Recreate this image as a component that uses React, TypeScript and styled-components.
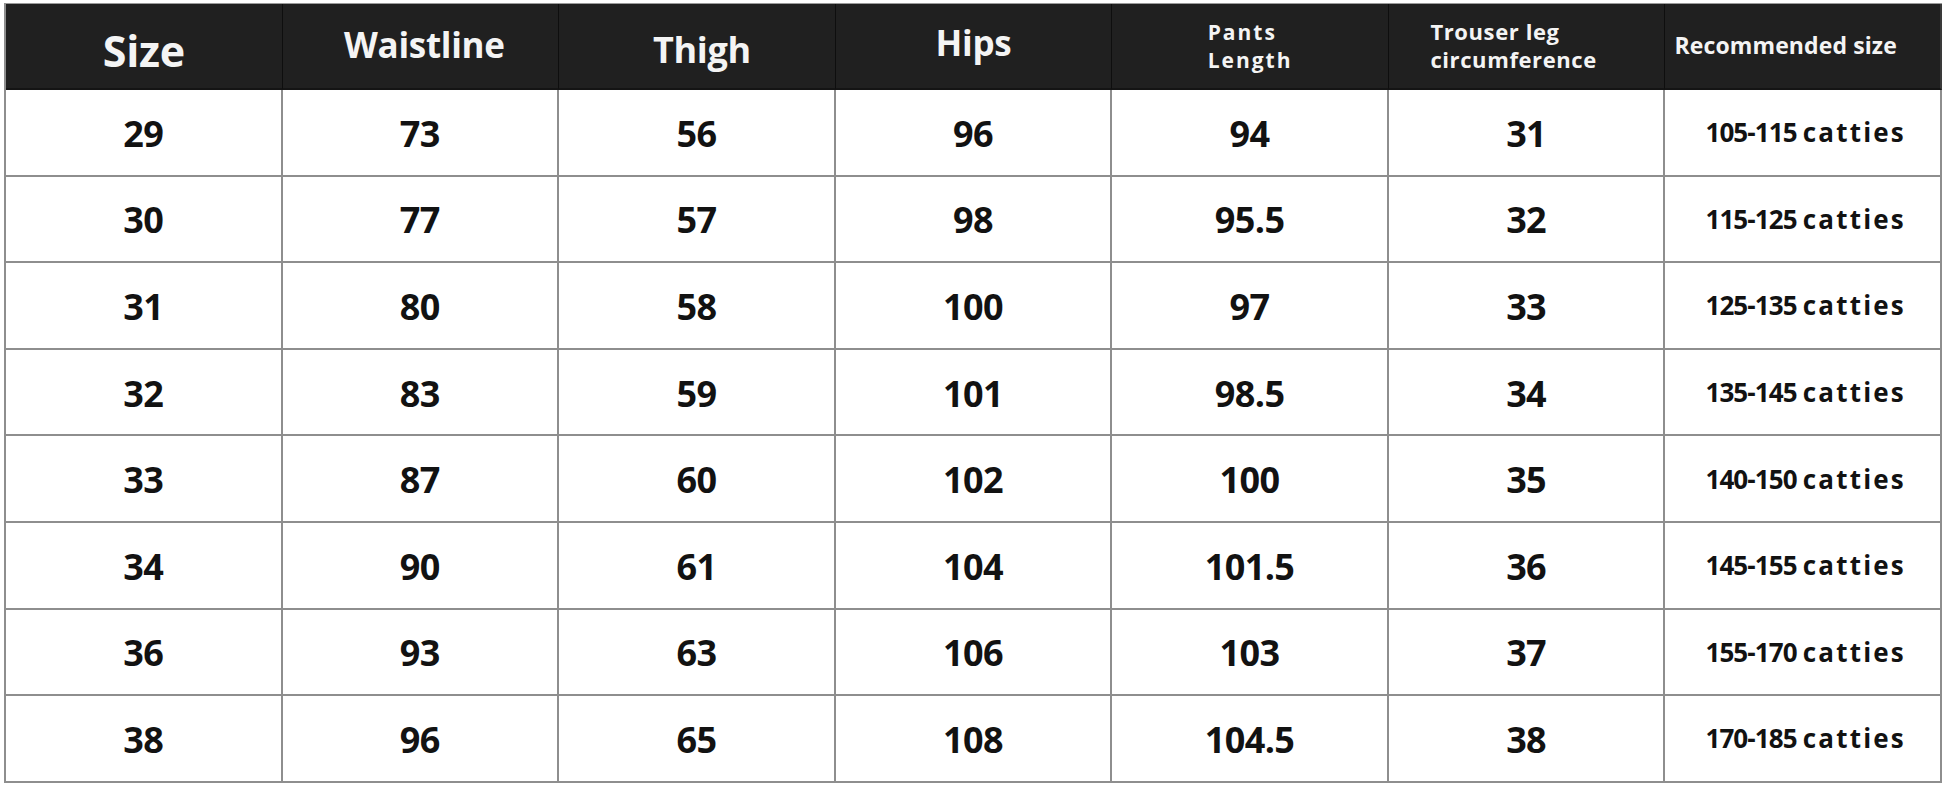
import React from "react";
import styled, { createGlobalStyle } from "styled-components";

const Global = createGlobalStyle`
  html, body { margin: 0; padding: 0; background: #ffffff; }
  body { font-family: "Open Sans", "Noto Sans", Arial, sans-serif; }
`;

const Page = styled.div`
  width: 1946px;
  height: 787px;
  padding: 3px 0 0 4px;
  box-sizing: border-box;
  background: #ffffff;
`;

const Table = styled.div`
  width: 1938px;
  display: flex;
  flex-direction: column;
  border-left: 2px solid #8e8e8e;
  border-top: 1px solid #9a9a9a;
  box-sizing: border-box;
`;

const Row = styled.div<{ $head?: boolean }>`
  display: grid;
  grid-template-columns: repeat(7, 1fr);
  height: ${(p) => (p.$head ? "86px" : "86.6px")};
  background: ${(p) => (p.$head ? "#202020" : "#ffffff")};
`;

const HeadCell = styled.div<{ $size: number; $shift?: number; $dx?: number; $ls?: number }>`
  display: flex;
  align-items: center;
  justify-content: center;
  box-sizing: border-box;
  border-right: 1px solid #0e0e0e;
  border-bottom: 2px solid #141414;
  color: #f4f4f4;
  font-weight: 700;
  font-size: ${(p) => p.$size}px;
  line-height: 1.3;
  letter-spacing: ${(p) => p.$ls ?? -0.3}px;
  padding-bottom: ${(p) => Math.max(0, -(p.$shift ?? 0) * 2)}px;
  padding-top: ${(p) => Math.max(0, (p.$shift ?? 0) * 2)}px;
  padding-left: ${(p) => Math.max(0, (p.$dx ?? 0) * 2)}px;
  padding-right: ${(p) => Math.max(0, -(p.$dx ?? 0) * 2)}px;
  white-space: nowrap;
  &:last-child {
    border-right: 2px solid #3a3a3a;
  }
`;

const HeadStack = styled.div`
  display: flex;
  flex-direction: column;
  align-items: flex-start;
  line-height: 28px;
`;

const Cell = styled.div`
  display: flex;
  align-items: center;
  justify-content: center;
  box-sizing: border-box;
  border-right: 2px solid #8e8e8e;
  border-bottom: 2px solid #8e8e8e;
  color: #121212;
  font-weight: 700;
  font-size: 36px;
  letter-spacing: -0.6px;
  padding-top: 2px;
`;

const RecCell = styled(Cell)`
  font-size: 26px;
  letter-spacing: -0.9px;
  padding-left: 6px;
  padding-top: 0;
`;

const Unit = styled.span`
  letter-spacing: 2.2px;
  margin-left: 6px;
`;

const rows: [string, string, string, string, string, string, string][] = [
  ["29", "73", "56", "96", "94", "31", "105-115"],
  ["30", "77", "57", "98", "95.5", "32", "115-125"],
  ["31", "80", "58", "100", "97", "33", "125-135"],
  ["32", "83", "59", "101", "98.5", "34", "135-145"],
  ["33", "87", "60", "102", "100", "35", "140-150"],
  ["34", "90", "61", "104", "101.5", "36", "145-155"],
  ["36", "93", "63", "106", "103", "37", "155-170"],
  ["38", "96", "65", "108", "104.5", "38", "170-185"],
];

export default function App() {
  return (
    <Page>
      <Global />
      <Table>
        <Row $head>
          <HeadCell $size={43} $shift={5}>Size</HeadCell>
          <HeadCell $size={35} $shift={-1} $dx={4}>Waistline</HeadCell>
          <HeadCell $size={36} $shift={4} $dx={5}>Thigh</HeadCell>
          <HeadCell $size={35} $shift={-3}>Hips</HeadCell>
          <HeadCell $size={21} $ls={2}>
            <HeadStack>
              <span>Pants</span>
              <span>Length</span>
            </HeadStack>
          </HeadCell>
          <HeadCell $size={22} $dx={-13} $shift={-1} $ls={0.6}>
            <HeadStack>
              <span>Trouser leg</span>
              <span>circumference</span>
            </HeadStack>
          </HeadCell>
          <HeadCell $size={23} $dx={-17} $ls={0.1}>Recommended size</HeadCell>
        </Row>
        {rows.map((r) => (
          <Row key={r[0]}>
            {r.slice(0, 6).map((v, i) => (
              <Cell key={i}>{v}</Cell>
            ))}
            <RecCell>
              {r[6]}
              <Unit>catties</Unit>
            </RecCell>
          </Row>
        ))}
      </Table>
    </Page>
  );
}
